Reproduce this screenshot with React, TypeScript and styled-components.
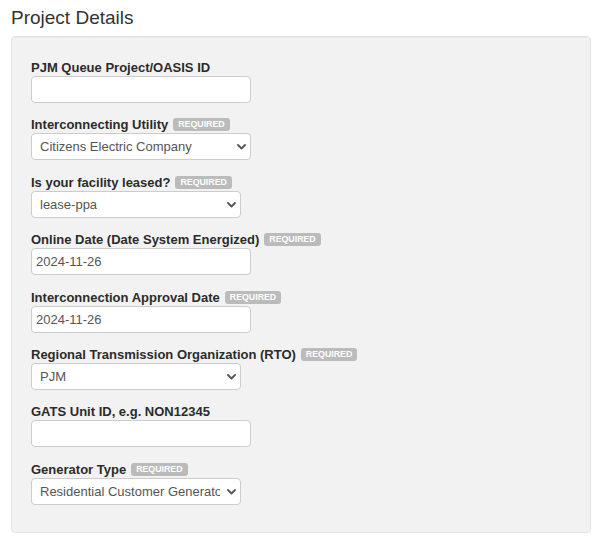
import React from 'react'
import styled, { createGlobalStyle } from 'styled-components'

const GlobalStyle = createGlobalStyle`
  html, body {
    margin: 0;
    padding: 0;
    background: #fff;
  }
  body {
    font-family: "Liberation Sans", Arial, Helvetica, sans-serif;
    color: #333;
  }
`

const Page = styled.div`
  padding: 7px 15px 0 11px;
`

const Heading = styled.h3`
  margin: 0 0 7px;
  font-size: 19px;
  line-height: 22px;
  font-weight: 400;
  color: #333;
`

const Well = styled.div`
  width: 580px;
  box-sizing: border-box;
  background: #f2f2f2;
  border: 1px solid #e3e3e3;
  border-radius: 4px;
  box-shadow: inset 0 1px 1px rgba(0, 0, 0, 0.03);
  padding: 22px 19px 27px;
  display: flex;
  flex-direction: column;
  gap: 13.4px;
`

const Group = styled.div`
  display: flex;
  flex-direction: column;
  align-items: flex-start;
`

const Label = styled.label`
  display: flex;
  align-items: center;
  gap: 5px;
  height: 17px;
  line-height: 17px;
  font-size: 13px;
  font-weight: 700;
  color: #2b2b2b;
  white-space: nowrap;
`

const Badge = styled.span`
  display: inline-block;
  height: 13px;
  line-height: 13px;
  padding: 0 5px;
  border-radius: 3px;
  background: #bbb;
  color: #fff;
  font-size: 8.8px;
  font-weight: 700;
  text-transform: uppercase;
`

const TextInput = styled.input<{ $width?: number }>`
  box-sizing: border-box;
  width: ${p => p.$width ?? 220}px;
  height: 27px;
  margin: 0;
  padding: 0 4px;
  border: 1px solid #ccc;
  border-radius: 4px;
  background: #fff;
  font-family: inherit;
  font-size: 13px;
  color: #555;
  outline: none;
`

const SelectWrap = styled.div<{ $width: number }>`
  position: relative;
  width: ${p => p.$width}px;
  height: 27px;
`

const Select = styled.select`
  appearance: none;
  -webkit-appearance: none;
  box-sizing: border-box;
  width: 100%;
  height: 100%;
  margin: 0;
  padding: 0 20px 0 8px;
  border: 1px solid #ccc;
  border-radius: 4px;
  background: #fff;
  font-family: inherit;
  font-size: 13px;
  color: #555;
  outline: none;
`

const Chevron = styled.svg`
  position: absolute;
  right: 5px;
  top: 11px;
  pointer-events: none;
`

type Field = {
  label: string
  required?: boolean
  kind: 'text' | 'select'
  value?: string
  width?: number
}

const fields: Field[] = [
  { label: 'PJM Queue Project/OASIS ID', kind: 'text' },
  { label: 'Interconnecting Utility', required: true, kind: 'select', value: 'Citizens Electric Company', width: 220 },
  { label: 'Is your facility leased?', required: true, kind: 'select', value: 'lease-ppa', width: 210 },
  { label: 'Online Date (Date System Energized)', required: true, kind: 'text', value: '2024-11-26' },
  { label: 'Interconnection Approval Date', required: true, kind: 'text', value: '2024-11-26' },
  { label: 'Regional Transmission Organization (RTO)', required: true, kind: 'select', value: 'PJM', width: 210 },
  { label: 'GATS Unit ID, e.g. NON12345', kind: 'text' },
  { label: 'Generator Type', required: true, kind: 'select', value: 'Residential Customer Generator', width: 210 },
]

const ChevronIcon = () => (
  <Chevron width="9" height="6" viewBox="0 0 9 6">
    <polyline points="1,1 4.5,4.5 8,1" fill="none" stroke="#555" strokeWidth="1.8" strokeLinecap="round" strokeLinejoin="round" />
  </Chevron>
)

const App = () => {
  return (
    <Page>
      <GlobalStyle />
      <Heading>Project Details</Heading>
      <Well>
        {fields.map(f => (
          <Group key={f.label}>
            <Label>
              {f.label}
              {f.required && <Badge>Required</Badge>}
            </Label>
            {f.kind === 'text' ? (
              <TextInput type="text" defaultValue={f.value ?? ''} />
            ) : (
              <SelectWrap $width={f.width ?? 210}>
                <Select defaultValue={f.value}>
                  <option value={f.value}>{f.value}</option>
                </Select>
                <ChevronIcon />
              </SelectWrap>
            )}
          </Group>
        ))}
      </Well>
    </Page>
  )
}

export default App
